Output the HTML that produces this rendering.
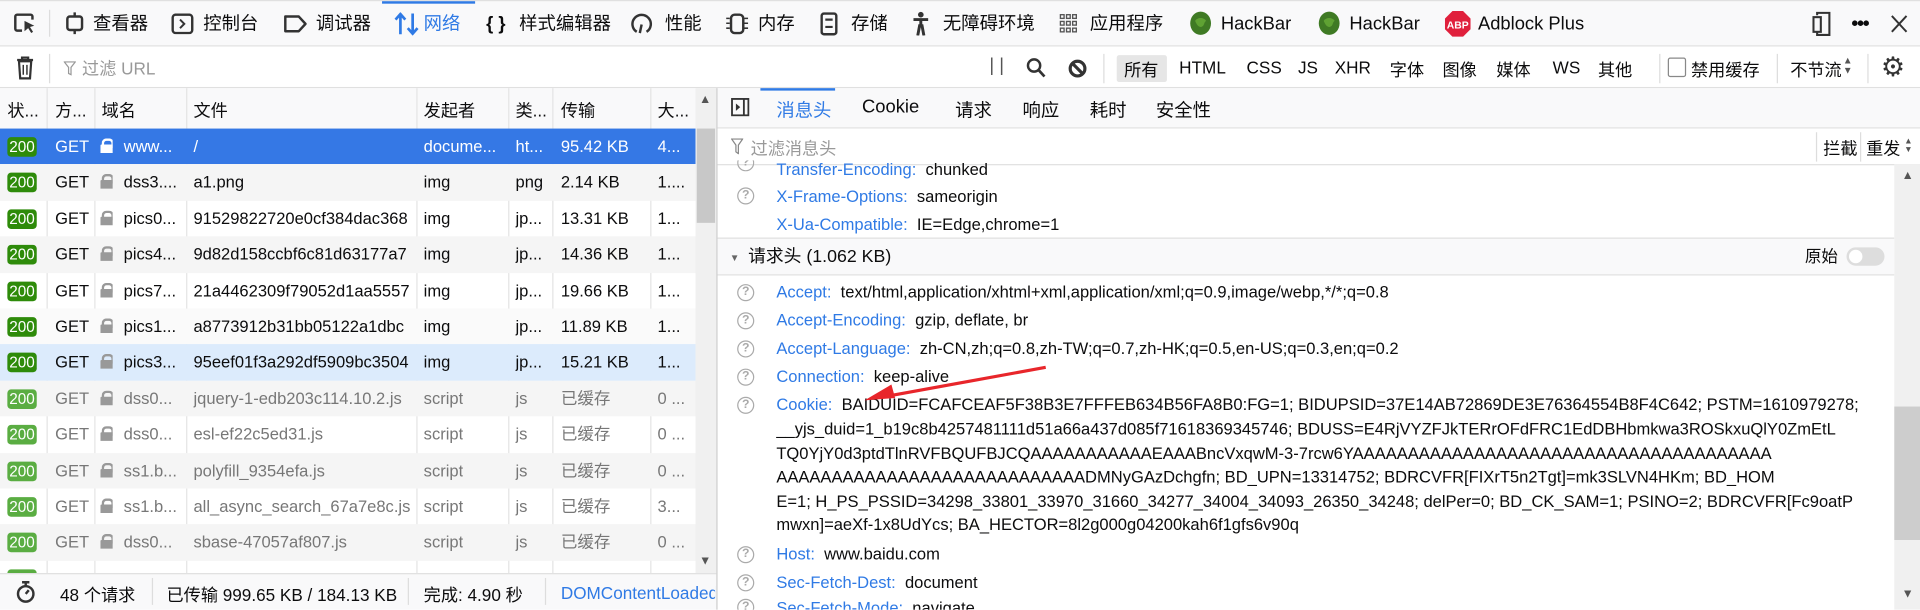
<!DOCTYPE html>
<html><head><meta charset="utf-8">
<style>
html,body{margin:0;padding:0;width:1920px;height:610px;overflow:hidden;background:#fff}
#w{position:absolute;left:0;top:0;width:1568px;height:498px;transform:scale(1.22449);transform-origin:0 0;font-family:"Liberation Sans","Noto Sans CJK SC",sans-serif;color:#0c0c0d;overflow:hidden}
.a{position:absolute;white-space:nowrap}
.tb{font-size:15px;top:11px;line-height:18px}
.ft{font-size:13.5px}
svg{position:absolute}
.row{position:absolute;left:0;width:568px;height:29.4px;font-size:13.5px;line-height:29.4px}
.row span{position:absolute;white-space:nowrap;overflow:hidden}
.b{left:6px;top:7px;width:24px;height:16px;line-height:16px;background:#2e8b0a;color:#fff;border-radius:3px;font-size:12.5px;text-align:center}
.lk{left:82px;top:8px;width:10px;height:12px}
.lk:before{content:"";position:absolute;left:1px;top:0;width:6px;height:6px;border:2px solid #999;border-bottom:none;border-radius:4px 4px 0 0}
.lk:after{content:"";position:absolute;left:0;top:5px;width:11px;height:8px;background:#999;border-radius:1px}
.vl{position:absolute;top:72px;width:1px;height:396px;background:#e4e4e4}
.hl{position:absolute;font-size:13.5px;line-height:18px;white-space:nowrap}
.k{color:#2f7ae5}
.q{position:absolute;left:602px;width:12px;height:12px;border:1.5px solid #aaa;border-radius:50%;font-size:10px;line-height:12px;text-align:center;color:#aaa;font-weight:bold}
</style></head><body><div id="w">
<!-- toolbar -->
<div class="a" style="left:0;top:0;width:1568px;height:38px;background:#f9f9fa;border-top:1px solid #e0e0e0;border-bottom:1px solid #e0e0e0;box-sizing:border-box"></div>
<div class="a" style="left:312px;top:1px;width:76px;height:2px;background:#2f7ae5"></div>
<div class="a" style="left:40px;top:8px;width:1px;height:22px;background:#ddd"></div>
<svg style="left:11px;top:10px" width="20" height="18" viewBox="0 0 20 18"><path d="M7 15H3a1.5 1.5 0 0 1-1.5-1.5v-10A1.5 1.5 0 0 1 3 2h11a1.5 1.5 0 0 1 1.5 1.5V6" fill="none" stroke="#333" stroke-width="2"/><path d="M9 7l8 4-3.5 1 2.5 4-1.5 1-2.5-4-3 2.5z" fill="#333"/></svg>
<svg style="left:53px;top:10px" width="16" height="18"><rect x="2" y="3.5" width="12" height="11" rx="2" fill="none" stroke="#333" stroke-width="2"/><path d="M8 0v3.5M8 14.5V18" stroke="#333" stroke-width="2"/></svg>
<div class="a tb" style="left:76px">查看器</div>
<svg style="left:140px;top:11px" width="18" height="17"><rect x="1" y="1" width="16" height="15" rx="2.5" fill="none" stroke="#333" stroke-width="2"/><path d="M7 5l3.5 3.5L7 12" fill="none" stroke="#333" stroke-width="1.6"/></svg>
<div class="a tb" style="left:166px">控制台</div>
<svg style="left:231px;top:12px" width="20" height="15"><path d="M2 1.5h11l5.5 6-5.5 6H2z" fill="none" stroke="#333" stroke-width="2" stroke-linejoin="round"/></svg>
<div class="a tb" style="left:258px">调试器</div>
<svg style="left:322px;top:10px" width="20" height="19"><path d="M5 18V2M1 6l4-4.5L9 6M15 1v16M11 13l4 4.5 4-4.5" fill="none" stroke="#2f7ae5" stroke-width="2.2"/></svg>
<div class="a tb" style="left:346px;color:#2f7ae5">网络</div>
<div class="a tb" style="left:397px;font-weight:bold">{ }</div>
<div class="a tb" style="left:424px">样式编辑器</div>
<svg style="left:515px;top:10px" width="18" height="19"><path d="M5 16A7.5 7.5 0 1 1 13 16" fill="none" stroke="#333" stroke-width="2"/><path d="M9 10l-1.5 7" stroke="#333" stroke-width="2"/></svg>
<div class="a tb" style="left:543px">性能</div>
<svg style="left:593px;top:10px" width="18" height="19"><rect x="4" y="2" width="10" height="15" rx="3" fill="none" stroke="#333" stroke-width="2"/><path d="M0 5h3M0 9h3M0 13h3M15 5h3M15 9h3M15 13h3" stroke="#333" stroke-width="1.3"/></svg>
<div class="a tb" style="left:619px">内存</div>
<svg style="left:670px;top:10px" width="14" height="19"><rect x="1" y="1" width="12" height="17" rx="2" fill="none" stroke="#333" stroke-width="2"/><path d="M4 6h6M4 12h6" stroke="#333" stroke-width="1.8"/></svg>
<div class="a tb" style="left:695px">存储</div>
<svg style="left:745px;top:9px" width="14" height="20"><circle cx="7" cy="3" r="2.3" fill="#333"/><path d="M1 7h12M7 6v7M4.5 20l1.5-8h2l1.5 8" stroke="#333" stroke-width="2.4" fill="none"/></svg>
<div class="a tb" style="left:770px">无障碍环境</div>
<svg style="left:865px;top:11px" width="15" height="16"><g fill="none" stroke="#555" stroke-width="1.1"><rect x="1" y="1" width="3" height="3"/><rect x="6" y="1" width="3" height="3"/><rect x="11" y="1" width="3" height="3"/><rect x="1" y="6.5" width="3" height="3"/><rect x="6" y="6.5" width="3" height="3"/><rect x="11" y="6.5" width="3" height="3"/><rect x="1" y="12" width="3" height="3"/><rect x="6" y="12" width="3" height="3"/><rect x="11" y="12" width="3" height="3"/></g></svg>
<div class="a tb" style="left:890px">应用程序</div>
<svg style="left:971px;top:9px" width="19" height="20"><ellipse cx="9.5" cy="10" rx="8.5" ry="9.5" fill="#3f7a24"/><path d="M5 8c2-3 7-3 9 0-2 1-1 4-4 5-3 0-4-3-5-5z" fill="#5fa233"/></svg>
<div class="a tb" style="left:997px">HackBar</div>
<svg style="left:1076px;top:9px" width="19" height="20"><ellipse cx="9.5" cy="10" rx="8.5" ry="9.5" fill="#3f7a24"/><path d="M5 8c2-3 7-3 9 0-2 1-1 4-4 5-3 0-4-3-5-5z" fill="#5fa233"/></svg>
<div class="a tb" style="left:1102px">HackBar</div>
<svg style="left:1180px;top:9px" width="21" height="21"><path d="M6.2 0h8.6L21 6.2v8.6L14.8 21H6.2L0 14.8V6.2z" fill="#e0203c"/><text x="10.5" y="14.3" font-size="8.5" font-weight="bold" fill="#fff" text-anchor="middle" font-family="Liberation Sans">ABP</text></svg>
<div class="a tb" style="left:1207px">Adblock Plus</div>
<svg style="left:1480px;top:9px" width="16" height="21"><path d="M4 3.5V1.5h10v18H4v-2" fill="none" stroke="#333" stroke-width="1.7"/><rect x="1" y="5" width="6" height="12" fill="none" stroke="#333" stroke-width="1.7"/></svg>
<div class="a" style="left:1512px;top:11px;font-size:16px;font-weight:bold;letter-spacing:-1px">•••</div>
<svg style="left:1544px;top:12px" width="14" height="15"><path d="M1 1l12 13M13 1L1 14" stroke="#333" stroke-width="1.6"/></svg>

<!-- filter bar -->
<div class="a" style="left:0;top:38px;width:1568px;height:34px;background:#fff;border-bottom:1px solid #e0e0e0;box-sizing:border-box"></div>
<svg style="left:13px;top:46px" width="15" height="19"><path d="M1 3h13M5 3V1h5v2" stroke="#333" stroke-width="1.8" fill="none"/><path d="M2.5 4h10l-1 14h-8z" fill="none" stroke="#333" stroke-width="1.8"/><path d="M6 7v8M9 7v8" stroke="#333" stroke-width="1.2"/></svg>
<div class="a" style="left:40px;top:44px;width:1px;height:24px;background:#ddd"></div>
<svg style="left:52px;top:50px" width="10" height="12"><path d="M0.5 0.5h9L6 5v6L4 10V5z" fill="none" stroke="#999" stroke-width="1"/></svg>
<div class="a" style="left:67px;top:46px;font-size:14px;color:#999">过滤 URL</div>
<div class="a" style="left:808px;top:45px;font-size:15px;color:#555">| |</div>
<svg style="left:838px;top:47px" width="16" height="17"><circle cx="6.5" cy="6.5" r="5" fill="none" stroke="#333" stroke-width="2"/><path d="M10 10l5 5.5" stroke="#333" stroke-width="2.2"/></svg>
<svg style="left:872px;top:48px" width="16" height="16"><circle cx="8" cy="8" r="6" fill="none" stroke="#333" stroke-width="2.6"/><path d="M4 4l8 8" stroke="#333" stroke-width="2.6"/></svg>
<div class="a" style="left:901px;top:44px;width:1px;height:24px;background:#ddd"></div>
<div class="a" style="left:912px;top:45px;width:41px;height:22px;background:#e6e6e6;border-radius:2px"></div>
<div class="a ft" style="left:918px;top:47px;font-size:14px">所有</div>
<div class="a" style="left:963px;top:47px;font-size:14px">HTML</div>
<div class="a" style="left:1018px;top:47px;font-size:14px">CSS</div>
<div class="a" style="left:1060px;top:47px;font-size:14px">JS</div>
<div class="a" style="left:1090px;top:47px;font-size:14px">XHR</div>
<div class="a" style="left:1135px;top:47px;font-size:14px">字体</div>
<div class="a" style="left:1178px;top:47px;font-size:14px">图像</div>
<div class="a" style="left:1222px;top:47px;font-size:14px">媒体</div>
<div class="a" style="left:1268px;top:47px;font-size:14px">WS</div>
<div class="a" style="left:1305px;top:47px;font-size:14px">其他</div>
<div class="a" style="left:1355px;top:44px;width:1px;height:24px;background:#ddd"></div>
<div class="a" style="left:1362px;top:47px;width:15px;height:16px;border:1.5px solid #888;border-radius:2px;box-sizing:border-box"></div>
<div class="a" style="left:1381px;top:47px;font-size:14px">禁用缓存</div>
<div class="a" style="left:1451px;top:44px;width:1px;height:24px;background:#ddd"></div>
<div class="a" style="left:1462px;top:47px;font-size:14px">不节流</div>
<div class="a" style="left:1505px;top:46px;font-size:8px;line-height:8px;color:#555">▲<br>▼</div>
<div class="a" style="left:1525px;top:44px;width:1px;height:24px;background:#ddd"></div>
<div class="a" style="left:1536px;top:42px;font-size:22px;color:#333">⚙</div>

<!-- left table -->
<div class="a" style="left:0;top:72px;width:568px;height:33px;background:#f9f9fa;border-bottom:1px solid #e0e0e0"></div>
<div class="vl" style="left:38px"></div><div class="vl" style="left:77px"></div><div class="vl" style="left:152px"></div><div class="vl" style="left:340px"></div><div class="vl" style="left:415px"></div><div class="vl" style="left:451px"></div><div class="vl" style="left:531px"></div>
<div class="a" style="top:80px;left:6px;font-size:14px">状...</div>
<div class="a" style="top:80px;left:45px;font-size:14px">方...</div>
<div class="a" style="top:80px;left:83px;font-size:14px">域名</div>
<div class="a" style="top:80px;left:158px;font-size:14px">文件</div>
<div class="a" style="top:80px;left:346px;font-size:14px">发起者</div>
<div class="a" style="top:80px;left:421px;font-size:14px">类...</div>
<div class="a" style="top:80px;left:458px;font-size:14px">传输</div>
<div class="a" style="top:80px;left:537px;font-size:14px">大...</div>

<div class="row" style="top:105px;background:#3578e5;color:#fff"><span class="b">200</span><span style="left:45px">GET</span><span class="lk" style="filter:brightness(3)"></span><span style="left:101px">www...</span><span style="left:158px">/</span><span style="left:346px">docume...</span><span style="left:421px">ht...</span><span style="left:458px">95.42 KB</span><span style="left:537px">4...</span></div>
<div class="row" style="top:134.4px;background:#f5f5f5"><span class="b">200</span><span style="left:45px">GET</span><span class="lk"></span><span style="left:101px">dss3....</span><span style="left:158px">a1.png</span><span style="left:346px">img</span><span style="left:421px">png</span><span style="left:458px">2.14 KB</span><span style="left:537px">1....</span></div>
<div class="row" style="top:163.8px"><span class="b">200</span><span style="left:45px">GET</span><span class="lk"></span><span style="left:101px">pics0...</span><span style="left:158px;width:182px">91529822720e0cf384dac368</span><span style="left:346px">img</span><span style="left:421px">jp...</span><span style="left:458px">13.31 KB</span><span style="left:537px">1...</span></div>
<div class="row" style="top:193.2px;background:#f5f5f5"><span class="b">200</span><span style="left:45px">GET</span><span class="lk"></span><span style="left:101px">pics4...</span><span style="left:158px;width:182px">9d82d158ccbf6c81d63177a7</span><span style="left:346px">img</span><span style="left:421px">jp...</span><span style="left:458px">14.36 KB</span><span style="left:537px">1...</span></div>
<div class="row" style="top:222.6px"><span class="b">200</span><span style="left:45px">GET</span><span class="lk"></span><span style="left:101px">pics7...</span><span style="left:158px;width:182px">21a4462309f79052d1aa5557</span><span style="left:346px">img</span><span style="left:421px">jp...</span><span style="left:458px">19.66 KB</span><span style="left:537px">1...</span></div>
<div class="row" style="top:252px;background:#fafafa"><span class="b">200</span><span style="left:45px">GET</span><span class="lk"></span><span style="left:101px">pics1...</span><span style="left:158px;width:182px">a8773912b31bb05122a1dbc</span><span style="left:346px">img</span><span style="left:421px">jp...</span><span style="left:458px">11.89 KB</span><span style="left:537px">1...</span></div>
<div class="row" style="top:281.4px;background:#dcebfc"><span class="b">200</span><span style="left:45px">GET</span><span class="lk"></span><span style="left:101px">pics3...</span><span style="left:158px;width:182px">95eef01f3a292df5909bc3504</span><span style="left:346px">img</span><span style="left:421px">jp...</span><span style="left:458px">15.21 KB</span><span style="left:537px">1...</span></div>
<div class="row" style="top:310.8px;background:#f5f5f5;color:#777"><span class="b" style="background:#5aad42">200</span><span style="left:45px">GET</span><span class="lk"></span><span style="left:101px">dss0...</span><span style="left:158px;width:182px">jquery-1-edb203c114.10.2.js</span><span style="left:346px">script</span><span style="left:421px">js</span><span style="left:458px">已缓存</span><span style="left:537px">0 ...</span></div>
<div class="row" style="top:340.2px;color:#777"><span class="b" style="background:#5aad42">200</span><span style="left:45px">GET</span><span class="lk"></span><span style="left:101px">dss0...</span><span style="left:158px">esl-ef22c5ed31.js</span><span style="left:346px">script</span><span style="left:421px">js</span><span style="left:458px">已缓存</span><span style="left:537px">0 ...</span></div>
<div class="row" style="top:369.6px;background:#f5f5f5;color:#777"><span class="b" style="background:#5aad42">200</span><span style="left:45px">GET</span><span class="lk"></span><span style="left:101px">ss1.b...</span><span style="left:158px">polyfill_9354efa.js</span><span style="left:346px">script</span><span style="left:421px">js</span><span style="left:458px">已缓存</span><span style="left:537px">0 ...</span></div>
<div class="row" style="top:399px;color:#777"><span class="b" style="background:#5aad42">200</span><span style="left:45px">GET</span><span class="lk"></span><span style="left:101px">ss1.b...</span><span style="left:158px">all_async_search_67a7e8c.js</span><span style="left:346px">script</span><span style="left:421px">js</span><span style="left:458px">已缓存</span><span style="left:537px">3...</span></div>
<div class="row" style="top:428.4px;background:#f5f5f5;color:#777"><span class="b" style="background:#5aad42">200</span><span style="left:45px">GET</span><span class="lk"></span><span style="left:101px">dss0...</span><span style="left:158px">sbase-47057af807.js</span><span style="left:346px">script</span><span style="left:421px">js</span><span style="left:458px">已缓存</span><span style="left:537px">0 ...</span></div>
<div class="row" style="top:457.8px;height:10px;overflow:hidden;color:#777"><span class="b" style="background:#5aad42;top:7px">200</span></div>
<!-- left scrollbar -->
<div class="a" style="left:568px;top:72px;width:17px;height:396px;background:#f0f0f0"></div>
<div class="a" style="left:569px;top:105px;width:15px;height:77px;background:#c8c8c8"></div>
<div class="a" style="left:571px;top:76px;font-size:10px;color:#555">▲</div>
<div class="a" style="left:571px;top:453px;font-size:10px;color:#555">▼</div>
<!-- status bar -->
<div class="a" style="left:0;top:468px;width:585px;height:30px;background:#f9f9fa;border-top:1px solid #e0e0e0;box-sizing:border-box"></div>
<svg style="left:13px;top:474px" width="16" height="19"><circle cx="8" cy="11" r="6.3" fill="none" stroke="#333" stroke-width="2"/><path d="M5 1.5h6M8 2v3M8 11l2.5-3" stroke="#333" stroke-width="2"/></svg>
<div class="a" style="left:49px;top:476px;font-size:14px">48 个请求</div>
<div class="a" style="left:124px;top:472px;width:1px;height:22px;background:#ddd"></div>
<div class="a" style="left:136px;top:476px;font-size:14px">已传输 999.65 KB / 184.13 KB</div>
<div class="a" style="left:333px;top:472px;width:1px;height:22px;background:#ddd"></div>
<div class="a" style="left:346px;top:476px;font-size:14px">完成: 4.90 秒</div>
<div class="a" style="left:445px;top:472px;width:1px;height:22px;background:#ddd"></div>
<div class="a" style="left:458px;top:476px;font-size:14px;color:#2f7ae5;width:126px;overflow:hidden">DOMContentLoaded</div>

<!-- right panel -->
<div class="a" style="left:585px;top:72px;width:1px;height:426px;background:#ccc"></div>
<div class="a" style="left:586px;top:72px;width:982px;height:32px;background:#f9f9fa;border-bottom:1px solid #e0e0e0"></div>
<div class="a" style="left:621px;top:72px;width:61px;height:2px;background:#2f7ae5"></div>
<svg style="left:597px;top:80px" width="15" height="15"><rect x="0.8" y="0.8" width="13.4" height="13.4" fill="none" stroke="#333" stroke-width="1.5"/><path d="M10.5 1v13" stroke="#333" stroke-width="1.5"/><path d="M4 4.5l3.5 3-3.5 3z" fill="#333"/></svg>
<div class="a" style="left:634px;top:79px;font-size:15px;color:#2f7ae5">消息头</div>
<div class="a" style="left:704px;top:79px;font-size:15px">Cookie</div>
<div class="a" style="left:780px;top:79px;font-size:15px">请求</div>
<div class="a" style="left:835px;top:79px;font-size:15px">响应</div>
<div class="a" style="left:890px;top:79px;font-size:15px">耗时</div>
<div class="a" style="left:944px;top:79px;font-size:15px">安全性</div>
<div class="a" style="left:586px;top:105px;width:982px;height:29px;background:#fff;border-bottom:1px solid #e0e0e0"></div>
<svg style="left:597px;top:113px" width="10" height="13"><path d="M0.5 0.5h9L6 5.5v7L4 11V5.5z" fill="none" stroke="#888" stroke-width="1"/></svg>
<div class="a" style="left:613px;top:111px;font-size:14px;color:#999">过滤消息头</div>
<div class="a" style="left:1483px;top:108px;width:1px;height:24px;background:#ddd"></div>
<div class="a" style="left:1489px;top:111px;font-size:14px">拦截</div>
<div class="a" style="left:1519px;top:108px;width:1px;height:24px;background:#ddd"></div>
<div class="a" style="left:1524px;top:111px;font-size:14px">重发</div>
<div class="a" style="left:1555px;top:112px;font-size:7px;line-height:7px;color:#555">▲<br>▼</div>

<div class="q" style="top:126px;clip-path:inset(5px 0 0 0)">?</div>
<div class="hl" style="left:634px;top:130px;clip-path:inset(3px 0 0 0)"><span class="k">Transfer-Encoding:</span>&nbsp; chunked</div>
<div class="q" style="top:153px">?</div>
<div class="hl" style="left:634px;top:152px"><span class="k">X-Frame-Options:</span>&nbsp; sameorigin</div>
<div class="hl" style="left:634px;top:175px"><span class="k">X-Ua-Compatible:</span>&nbsp; IE=Edge,chrome=1</div>
<div class="a" style="left:586px;top:194px;width:961px;height:31px;background:#f9f9fa;border-top:1px solid #e0e0e0;border-bottom:1px solid #e0e0e0;box-sizing:border-box"></div>
<div class="a" style="left:596px;top:206px;font-size:8px;color:#666">▼</div>
<div class="hl" style="left:611px;top:201px;font-size:14.5px">请求头 (1.062 KB)</div>
<div class="hl" style="left:1474px;top:201px">原始</div>
<div class="a" style="left:1508px;top:202px;width:31px;height:15px;border-radius:8px;background:#ddd"></div>
<div class="a" style="left:1510px;top:204px;width:11px;height:11px;border-radius:50%;background:#fff"></div>

<div class="q" style="top:232px">?</div>
<div class="hl" style="left:634px;top:230px"><span class="k">Accept:</span>&nbsp; text/html,application/xhtml+xml,application/xml;q=0.9,image/webp,*/*;q=0.8</div>
<div class="q" style="top:255px">?</div>
<div class="hl" style="left:634px;top:253px"><span class="k">Accept-Encoding:</span>&nbsp; gzip, deflate, br</div>
<div class="q" style="top:278px">?</div>
<div class="hl" style="left:634px;top:276px"><span class="k">Accept-Language:</span>&nbsp; zh-CN,zh;q=0.8,zh-TW;q=0.7,zh-HK;q=0.5,en-US;q=0.3,en;q=0.2</div>
<div class="q" style="top:301px">?</div>
<div class="hl" style="left:634px;top:299px"><span class="k">Connection:</span>&nbsp; keep-alive</div>
<div class="q" style="top:324px">?</div>
<div class="hl" style="left:634px;top:322px"><span class="k">Cookie:</span>&nbsp; BAIDUID=FCAFCEAF5F38B3E7FFFEB634B56FA8B0:FG=1; BIDUPSID=37E14AB72869DE3E76364554B8F4C642; PSTM=1610979278;</div>
<div class="hl" style="left:634px;top:342px">__yjs_duid=1_b19c8b4257481111d51a66a437d085f71618369345746; BDUSS=E4RjVYZFJkTERrOFdFRC1EdDBHbmkwa3ROSkxuQlY0ZmEtL</div>
<div class="hl" style="left:634px;top:362px">TQ0YjY0d3ptdTlnRVFBQUFBJCQAAAAAAAAAAAEAAABncVxqwM-3-7rcw6YAAAAAAAAAAAAAAAAAAAAAAAAAAAAAAAAAAAAAA</div>
<div class="hl" style="left:634px;top:381px">AAAAAAAAAAAAAAAAAAAAAAAAAAAADMNyGAzDchgfn; BD_UPN=13314752; BDRCVFR[FIXrT5n2Tgt]=mk3SLVN4HKm; BD_HOM</div>
<div class="hl" style="left:634px;top:401px">E=1; H_PS_PSSID=34298_33801_33970_31660_34277_34004_34093_26350_34248; delPer=0; BD_CK_SAM=1; PSINO=2; BDRCVFR[Fc9oatP</div>
<div class="hl" style="left:634px;top:420px">mwxn]=aeXf-1x8UdYcs; BA_HECTOR=8l2g000g04200kah6f1gfs6v90q</div>
<div class="q" style="top:446px">?</div>
<div class="hl" style="left:634px;top:444px"><span class="k">Host:</span>&nbsp; www.baidu.com</div>
<div class="q" style="top:469px">?</div>
<div class="hl" style="left:634px;top:467px"><span class="k">Sec-Fetch-Dest:</span>&nbsp; document</div>
<div class="q" style="top:489px">?</div>
<div class="hl" style="left:634px;top:488px"><span class="k">Sec-Fetch-Mode:</span>&nbsp; navigate</div>
<!-- arrow -->
<svg style="left:700px;top:280px" width="160" height="60"><path d="M154 20L22 44" stroke="#e8262b" stroke-width="2.6"/><path d="M6 47l22-13 3 11z" fill="#e8262b"/></svg>
<!-- right scrollbar -->
<div class="a" style="left:1547px;top:134px;width:21px;height:364px;background:#f0f0f0"></div>
<div class="a" style="left:1547px;top:332px;width:21px;height:109px;background:#cdcdcd"></div>
<div class="a" style="left:1553px;top:138px;font-size:10px;color:#555">▲</div>
<div class="a" style="left:1553px;top:480px;font-size:10px;color:#555">▼</div>
</div></body></html>
